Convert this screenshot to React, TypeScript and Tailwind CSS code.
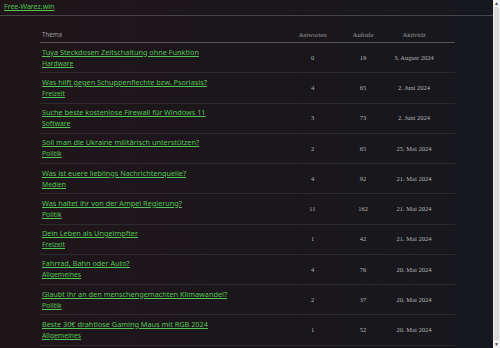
const threads = [
  { title: "Tuya Steckdosen Zeitschaltung ohne Funktion", cat: "Hardware", answers: 0, views: 19, date: "3. August 2024" },
  { title: "Was hilft gegen Schuppenflechte bzw. Psoriasis?", cat: "Freizeit", answers: 4, views: 65, date: "2. Juni 2024" },
  { title: "Suche beste kostenlose Firewall für Windows 11", cat: "Software", answers: 3, views: 73, date: "2. Juni 2024" },
  { title: "Soll man die Ukraine militärisch unterstützen?", cat: "Politik", answers: 2, views: 65, date: "25. Mai 2024" },
  { title: "Was ist euere lieblings Nachrichtenquelle?", cat: "Medien", answers: 4, views: 92, date: "21. Mai 2024" },
  { title: "Was haltet ihr von der Ampel Regierung?", cat: "Politik", answers: 11, views: 162, date: "21. Mai 2024" },
  { title: "Dein Leben als Ungeimpfter", cat: "Freizeit", answers: 1, views: 42, date: "21. Mai 2024" },
  { title: "Fahrrad, Bahn oder Auto?", cat: "Allgemeines", answers: 4, views: 76, date: "20. Mai 2024" },
  { title: "Glaubt ihr an den menschengemachten Klimawandel?", cat: "Politik", answers: 2, views: 37, date: "20. Mai 2024" },
  { title: "Beste 30€ drahtlose Gaming Maus mit RGB 2024", cat: "Allgemeines", answers: 1, views: 52, date: "20. Mai 2024" },
];

export default function App() {
  return (
    <div className="h-screen flex overflow-hidden bg-linear-to-r from-[#1f1519] to-[#16181d] font-['Noto_Sans',sans-serif]">
      <div className="flex-1 min-w-0">
        {/* top bar */}
        <div className="h-[16px] flex items-center px-[4px] border-b border-[#46464a]">
          <a href="#" className="text-[7px] text-[#52c552] underline underline-offset-1">
            Free-Warez.win
          </a>
        </div>

        <div className="w-[415px] ml-[40px] pt-[11px]">
          <div className="grid grid-cols-[248px_49px_52px_50px_1fr] h-[16px] items-center border-b border-[#55555a] text-[#9a9a9a]">
            <span className="pl-[2px] text-[6.2px]">Thema</span>
            <span className="text-center text-[6.5px] font-['Liberation_Serif',serif]">Antworten</span>
            <span className="text-center text-[6.5px] font-['Liberation_Serif',serif]">Aufrufe</span>
            <span className="text-center text-[6.5px] font-['Liberation_Serif',serif]">Aktivität</span>
            <span />
          </div>

          {threads.map((t, i) => (
            <div
              key={i}
              className="grid grid-cols-[248px_49px_52px_50px_1fr] h-[30.25px] items-center border-b border-[#2b2b30]"
            >
              <div className="pl-[2px] flex flex-col">
                <a href="#" className="text-[7.3px] leading-[11px] text-[#52c552] underline underline-offset-1 whitespace-nowrap">
                  {t.title}
                </a>
                <a href="#" className="text-[6.8px] leading-[11px] text-[#52c552] underline underline-offset-1 w-fit">
                  {t.cat}
                </a>
              </div>
              <span className="text-center text-[6.5px] text-[#b5b5b5] font-['Liberation_Serif',serif]">{t.answers}</span>
              <span className="text-center text-[6.5px] text-[#b5b5b5] font-['Liberation_Serif',serif]">{t.views}</span>
              <span className="text-center text-[6.5px] text-[#b5b5b5] font-['Liberation_Serif',serif] whitespace-nowrap">{t.date}</span>
              <span />
            </div>
          ))}
        </div>
      </div>

      {/* scrollbar strip */}
      <div className="w-[7px] shrink-0 bg-[#f1f1f1] flex flex-col items-center">
        <span className="text-[5px] leading-[7px] text-[#505050]">▲</span>
        <div className="w-[5px] flex-1 bg-[#dcdcdc] rounded-[2px]" />
        <span className="text-[5px] leading-[7px] text-[#505050]">▼</span>
      </div>
    </div>
  );
}
